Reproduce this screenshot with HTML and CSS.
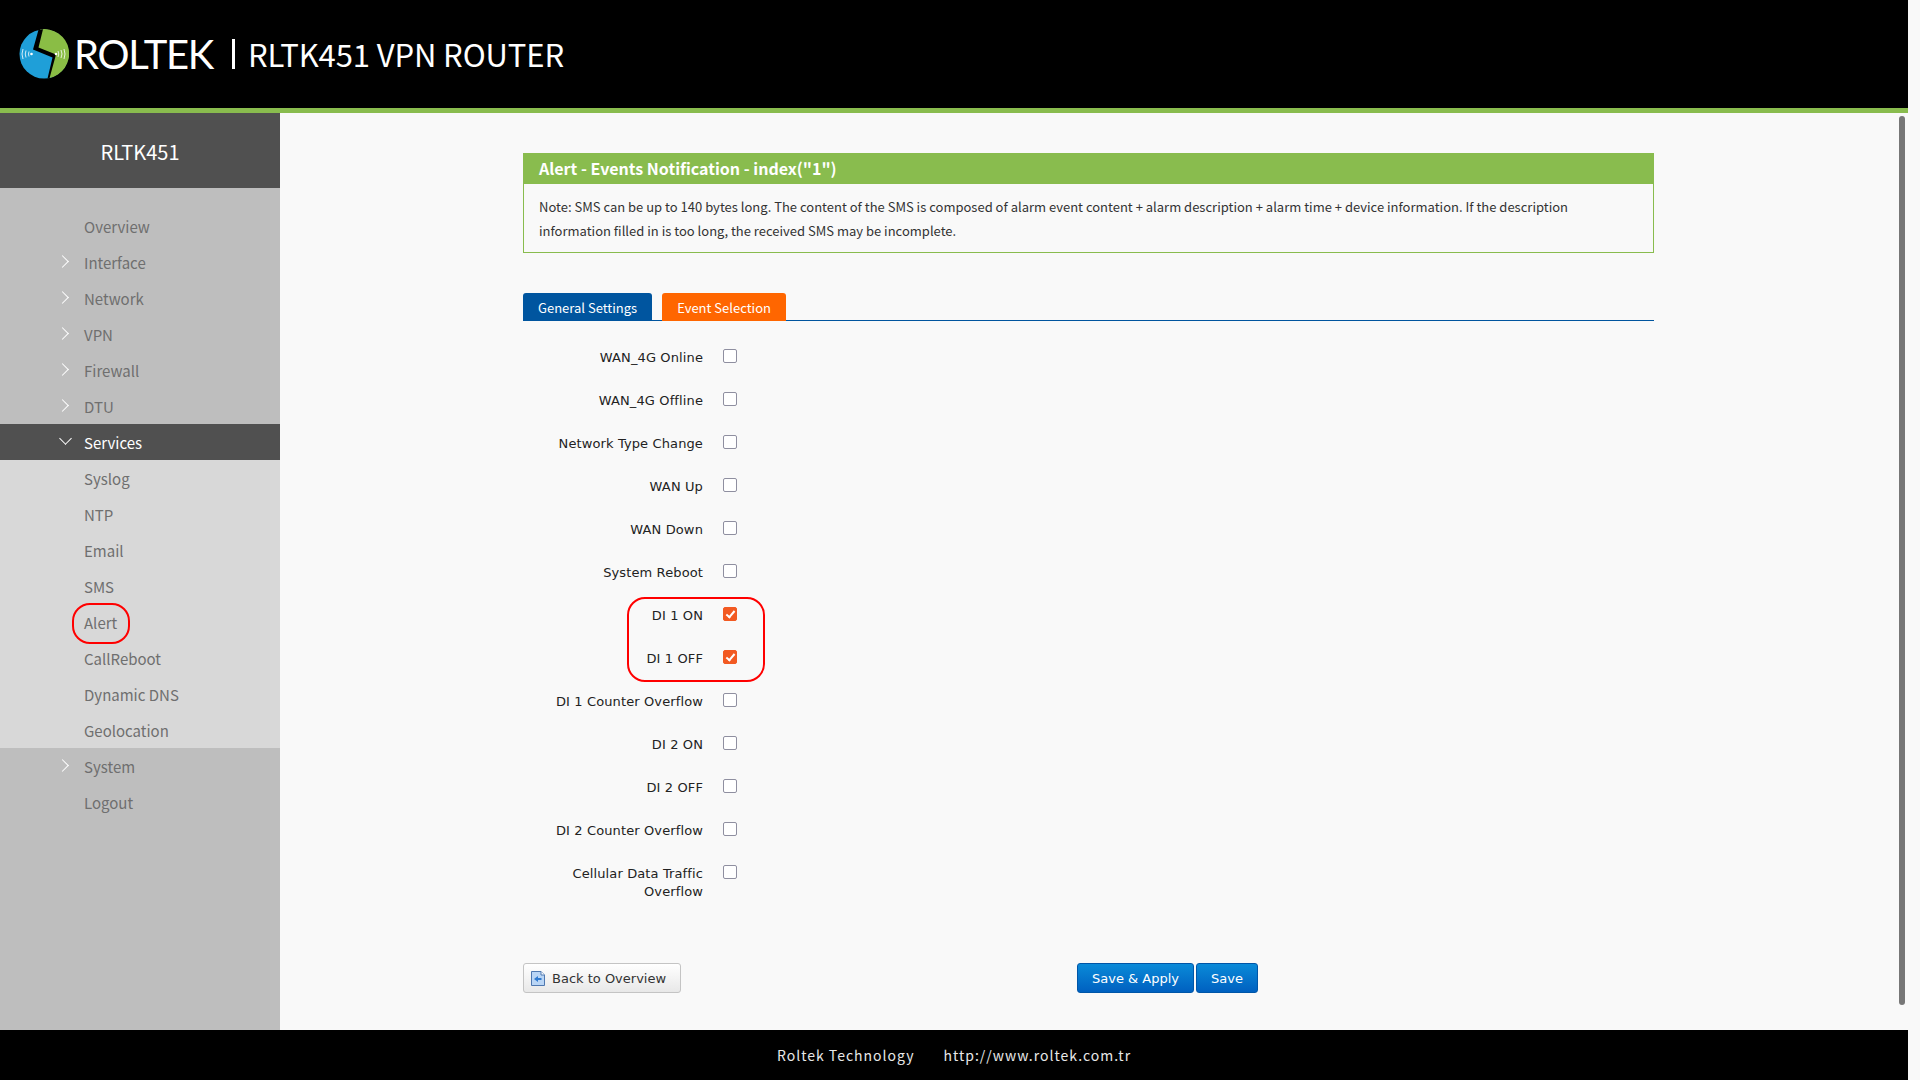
FILE: index.html
```html
<!DOCTYPE html>
<html lang="en">
<head>
<meta charset="utf-8">
<title>RLTK451 VPN Router</title>
<link rel="stylesheet" href="styles.css">
</head>
<body>
<div class="page">
  <header class="topbar">
    <div class="brand">
      <svg class="logo" viewBox="0 0 50 50" aria-hidden="true">
        <circle cx="25" cy="25" r="24.5" fill="#1f9fd8"/>
        <path d="M21 0.5A24.5 24.5 0 0 1 30 49L36 26 18 19Z" fill="#8abd45"/>
        <path d="M19.500 0.800 L14 20.500 L33.500 28.500 L28.500 49.500 L30.500 49.300 L37 25.500 L19.500 18.500 L24 0.300Z" fill="#000"/>
        <path d="M4 20q-2 5 0 10M7 21.500q-1.500 3.500 0 7M10 22.500q-1 2.500 0 5M42 21q2 4 0 8M45 20q2 5 0 10M39 22q1.500 3 0 6" fill="none" stroke="#fff" stroke-width=".8"/>
        <circle cx="12.500" cy="25" r="1.300" fill="#fff"/>
        <circle cx="37" cy="25" r="1.300" fill="#fff"/>
      </svg>
      <span class="wordmark">ROLTEK</span>
      <span class="divider"></span>
      <span class="product">RLTK451 VPN ROUTER</span>
    </div>
  </header>
  <div class="body-row">
    <aside class="sidebar">
      <div class="side-title">RLTK451</div>
      <nav class="menu">
        <a class="item">Overview</a>
        <a class="item has-arrow">Interface</a>
        <a class="item has-arrow">Network</a>
        <a class="item has-arrow">VPN</a>
        <a class="item has-arrow">Firewall</a>
        <a class="item has-arrow">DTU</a>
        <a class="item active has-arrow open">Services</a>
        <div class="submenu">
          <a class="item">Syslog</a>
          <a class="item">NTP</a>
          <a class="item">Email</a>
          <a class="item">SMS</a>
          <a class="item"><span class="ring">Alert</span></a>
          <a class="item">CallReboot</a>
          <a class="item">Dynamic DNS</a>
          <a class="item">Geolocation</a>
        </div>
        <a class="item has-arrow">System</a>
        <a class="item">Logout</a>
      </nav>
    </aside>
    <main class="content">
      <section class="notice">
        <h2 class="notice-head">Alert - Events Notification - index("1")</h2>
        <p class="notice-body">Note: SMS can be up to 140 bytes long. The content of the SMS is composed of alarm event content + alarm description + alarm time + device information. If the description information filled in is too long, the received SMS may be incomplete.</p>
      </section>
      <div class="tabs">
        <span class="tab tab-blue">General Settings</span>
        <span class="tab tab-orange">Event Selection</span>
      </div>
      <form class="fields">
        <label class="row"><span class="lab">WAN_4G Online</span><input type="checkbox"></label>
        <label class="row"><span class="lab">WAN_4G Offline</span><input type="checkbox"></label>
        <label class="row"><span class="lab">Network Type Change</span><input type="checkbox"></label>
        <label class="row"><span class="lab">WAN Up</span><input type="checkbox"></label>
        <label class="row"><span class="lab">WAN Down</span><input type="checkbox"></label>
        <label class="row"><span class="lab">System Reboot</span><input type="checkbox"></label>
        <div class="marked">
          <label class="row"><span class="lab">DI 1 ON</span><input type="checkbox" checked></label>
          <label class="row"><span class="lab">DI 1 OFF</span><input type="checkbox" checked></label>
        </div>
        <label class="row"><span class="lab">DI 1 Counter Overflow</span><input type="checkbox"></label>
        <label class="row"><span class="lab">DI 2 ON</span><input type="checkbox"></label>
        <label class="row"><span class="lab">DI 2 OFF</span><input type="checkbox"></label>
        <label class="row"><span class="lab">DI 2 Counter Overflow</span><input type="checkbox"></label>
        <label class="row"><span class="lab">Cellular Data Traffic Overflow</span><input type="checkbox"></label>
      </form>
      <div class="actions">
        <button class="btn btn-back" type="button">
          <svg class="back-icon" viewBox="0 0 14 15" aria-hidden="true">
            <path d="M.5.5H10L13.500 4V14.500H.5Z" fill="#b9d5f5" stroke="#4f78b0"/>
            <path d="M10 .5V4H13.500" fill="#fff" stroke="#4f78b0"/>
            <path d="M3 8 7 5V7H10.500V9H7V11Z" fill="#2f7ad0"/>
          </svg>
          <span class="btn-text">Back to Overview</span>
        </button>
        <div class="save-group">
          <button class="btn btn-blue" type="button"><span class="btn-text">Save &amp; Apply</span></button>
          <button class="btn btn-blue" type="button"><span class="btn-text">Save</span></button>
        </div>
      </div>
    </main>
  </div>
  <footer class="foot"><span>Roltek Technology</span><span>http://www.roltek.com.tr</span></footer>
</div>
<div class="scrollbar"></div>
</body>
</html>
```
FILE: styles.css
```css
*, *::before, *::after { box-sizing: border-box; }
html, body { margin: 0; height: 100%; overflow: hidden; background: #f9f9f9; }
body { font-family: "Noto Sans CJK SC", "Noto Sans", sans-serif; }
.page { width: 1908px; height: 1080px; display: flex; flex-direction: column; }

.topbar { height: 113px; flex: none; background: #000; border-bottom: 5px solid #89bc4e; display: flex; align-items: flex-start; }
.brand { display: flex; align-items: center; height: 108px; padding: 0 0 0 19px; color: #fff; }
.logo { width: 50px; height: 50px; flex: none; }
.wordmark { font-family: Lato, sans-serif; font-size: 40px; line-height: 48px; letter-spacing: -1.300px; margin-left: 5px; font-weight: 400; }
.divider { width: 3px; height: 30px; background: #fff; margin-left: 19px; }
.product { font-size: 31px; line-height: 48px; margin-left: 13px; letter-spacing: -.1px; }

.body-row { flex: 1; display: flex; min-height: 0; }
.sidebar { width: 280px; flex: none; background: #bebebe; }
.side-title { height: 75px; padding-top: 2px; background: #505050; color: #fff; font-size: 20px; display: flex; align-items: center; justify-content: center; }
.menu { padding-top: 20px; }
.item { display: flex; align-items: center; height: 36px; padding-left: 84px; color: #6f6f6f; font-size: 15px; position: relative; }
.has-arrow::before { content: ""; position: absolute; left: 58px; top: 13px; width: 9px; height: 9px; border-top: 1.500px solid #fff; border-right: 1.500px solid #fff; transform: rotate(45deg); }
.has-arrow.open::before { left: 61px; top: 10px; transform: rotate(135deg); }
.item.active { background: #505050; color: #fff; }
.submenu { background: #d8d8d8; }
.ring { position: relative; }
.ring::after { content: ""; position: absolute; left: -12px; top: -9px; width: 58px; height: 41px; border: 2px solid #f00; border-radius: 18px; }

.content { flex: 1; min-width: 0; padding: 40px 254px 0 243px; background: #f9f9f9; }
.notice { border: 1px solid #89bc4e; }
.notice-head { margin: 0; height: 30px; padding-left: 15px; background: #89bc4e; color: #fff; font-size: 16px; font-weight: 700; line-height: 29px; }
.notice-body { margin: 0; padding: 11px 15px 9px; color: #333; font-size: 13px; line-height: 24px; }

.tabs { display: flex; gap: 10px; margin-top: 40px; height: 28px; border-bottom: 1px solid #00559f; }
.tab { height: 28px; padding: 0 15px; border-radius: 3px 3px 0 0; color: #fff; font-size: 13px; line-height: 30px; }
.tab-blue { background: #00559f; }
.tab-orange { background: #ff6600; }

.fields { padding-top: 24px; height: 642px; }
.row { display: flex; align-items: flex-start; height: 43px; }
.lab { width: 180px; text-align: right; color: #222; font-family: "DejaVu Sans", Verdana, sans-serif; font-size: 13px; letter-spacing: .12px; line-height: 18px; padding-top: 4px; }
.row input { appearance: none; width: 14px; height: 14px; margin: 4px 0 0 20px; border: 1px solid #8f8fa0; border-radius: 2px; background: #fff; position: relative; }
.row input:checked { background: #f25a22; border-color: #f25a22; }
.row input:checked::after { content: ""; position: absolute; left: 3.500px; top: .5px; width: 5px; height: 9px; border-right: 2px solid #fff; border-bottom: 2px solid #fff; transform: rotate(40deg); }
.marked { position: relative; }
.marked::after { content: ""; position: absolute; left: 104px; top: -6px; width: 138px; height: 85px; border: 2px solid #f00; border-radius: 18px; pointer-events: none; }

.actions { position: relative; display: flex; justify-content: flex-start; }
.btn { height: 30px; border-radius: 3px; font-family: "DejaVu Sans", Verdana, sans-serif; font-size: 13px; line-height: 28px; padding: 0; cursor: pointer; }
.btn-text { position: relative; top: 1px; }
.btn-back { width: 158px; display: flex; align-items: center; justify-content: flex-start; gap: 7px; padding-left: 7px; color: #333; border: 1px solid #c4c4c4; background: linear-gradient(#fff, #e8e8e8); }
.back-icon { width: 14px; height: 15px; flex: none; }
.save-group { display: flex; gap: 2px; margin-left: 396px; }
.btn-blue { color: #fff; border: 1px solid #0056a8; background: linear-gradient(#0a8ad8, #0060c0); }
.save-group .btn-blue:first-child { width: 117px; }
.save-group .btn-blue:last-child { width: 62px; }

.foot { height: 50px; flex: none; background: #000; color: #e8e8e8; display: flex; align-items: center; justify-content: center; gap: 29px; font-size: 14px; letter-spacing: 1px; }

.scrollbar { position: absolute; left: 1899px; top: 116px; width: 6px; height: 889px; background: #777; border-radius: 3px; }
```
